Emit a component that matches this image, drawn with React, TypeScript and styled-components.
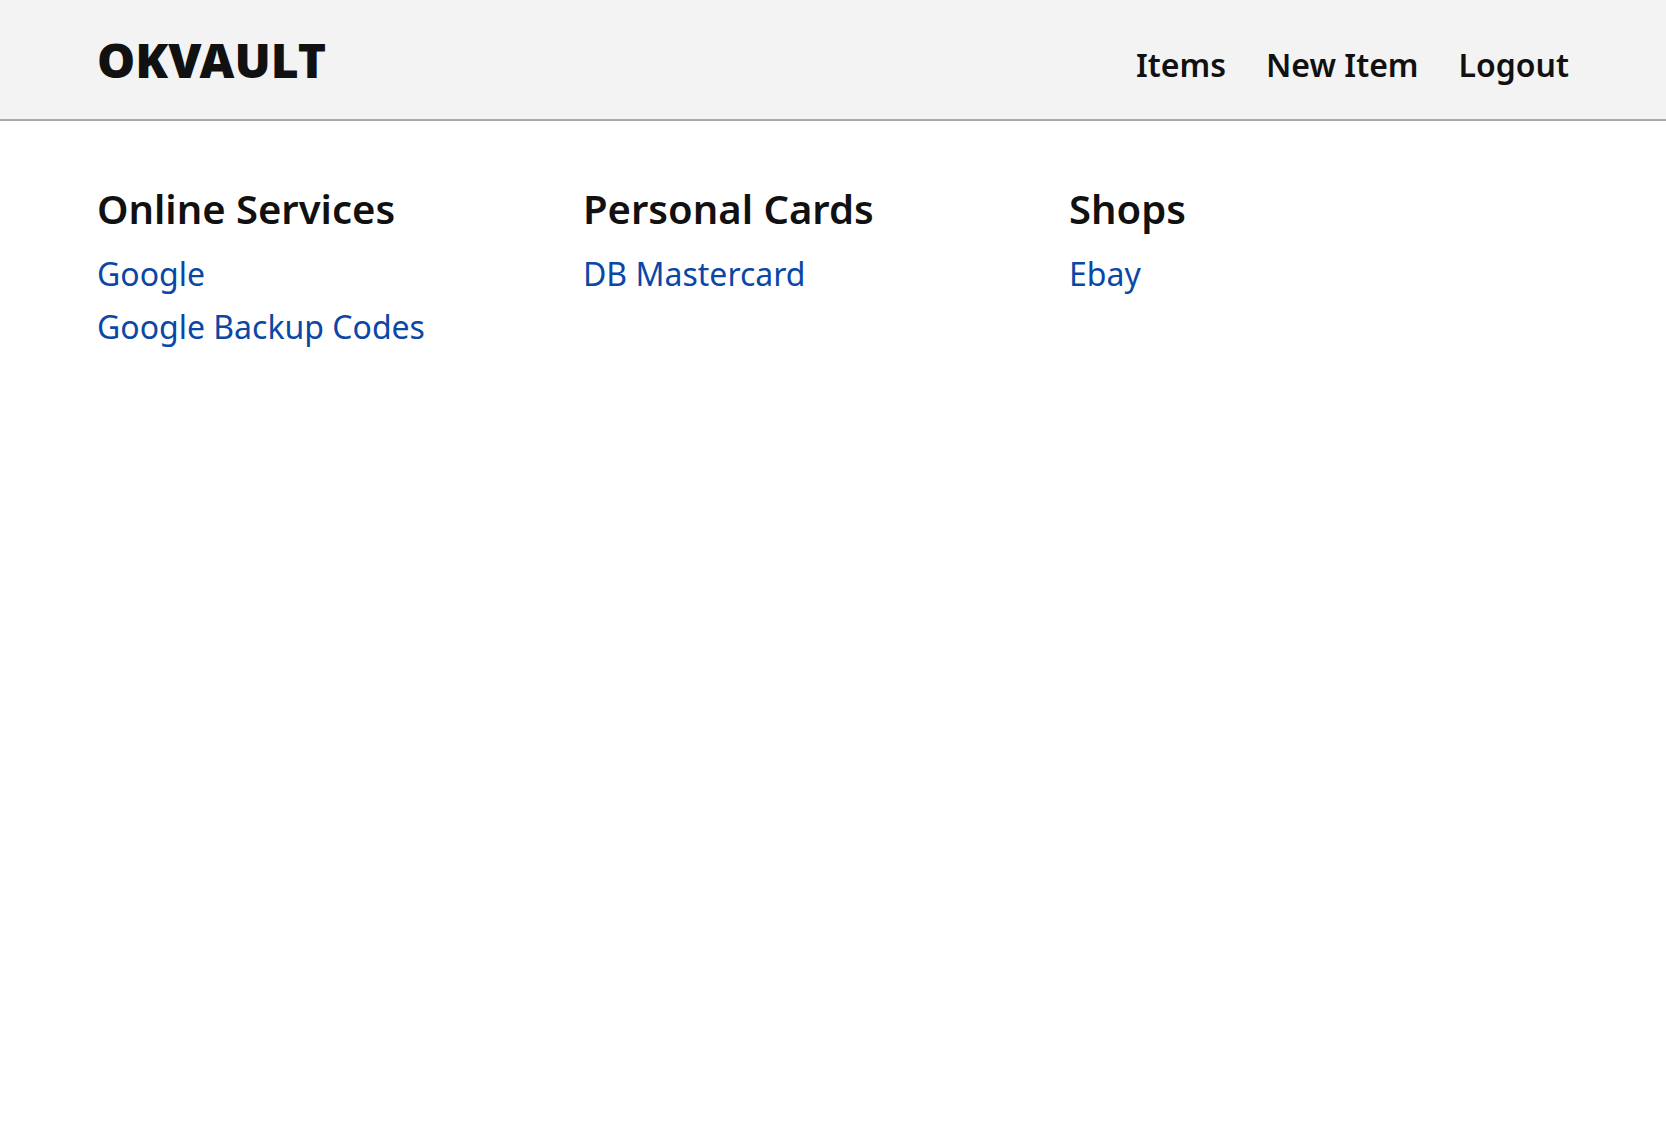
import React from "react"
import styled, { createGlobalStyle } from "styled-components"

const GlobalStyle = createGlobalStyle`
    html, body {
        margin: 0;
        padding: 0;
        background: #fff;
        font-family: "Noto Sans", "Open Sans", sans-serif;
        color: #111;
    }
`

const Header = styled.header`
    height: 119px;
    background: #f3f3f3;
    border-bottom: 2px solid #aaa;
    display: flex;
    align-items: center;
    justify-content: space-between;
    padding: 0 97px;
`

const Logo = styled.a`
    font-size: 48px;
    font-weight: 900;
    color: #111;
    text-decoration: none;
    margin-top: -1px;
`

const Nav = styled.nav`
    display: flex;
    gap: 40px;
    margin-top: 10px;
`

const NavLink = styled.a`
    font-size: 32px;
    font-weight: 600;
    color: #111;
    text-decoration: none;
`

const Main = styled.main`
    display: grid;
    grid-template-columns: repeat(3, 486px);
    padding: 60px 97px;
`

const Column = styled.section`
    display: flex;
    flex-direction: column;
`

const Heading = styled.h2`
    margin: 0 0 11px;
    font-size: 40px;
    font-weight: 600;
    line-height: 1.4;
`

const ItemLink = styled.a`
    font-size: 32px;
    line-height: 1.65;
    color: #0a47a6;
    text-decoration: none;
    align-self: flex-start;
`

type Group = { title: string; items: string[] }

const groups: Group[] = [
    { title: "Online Services", items: ["Google", "Google Backup Codes"] },
    { title: "Personal Cards", items: ["DB Mastercard"] },
    { title: "Shops", items: ["Ebay"] },
]

const App = () => (
    <>
        <GlobalStyle />
        <Header>
            <Logo href="#">OKVAULT</Logo>
            <Nav>
                <NavLink href="#">Items</NavLink>
                <NavLink href="#">New Item</NavLink>
                <NavLink href="#">Logout</NavLink>
            </Nav>
        </Header>
        <Main>
            {groups.map((g) => (
                <Column key={g.title}>
                    <Heading>{g.title}</Heading>
                    {g.items.map((item) => (
                        <ItemLink key={item} href="#">
                            {item}
                        </ItemLink>
                    ))}
                </Column>
            ))}
        </Main>
    </>
)

export default App
